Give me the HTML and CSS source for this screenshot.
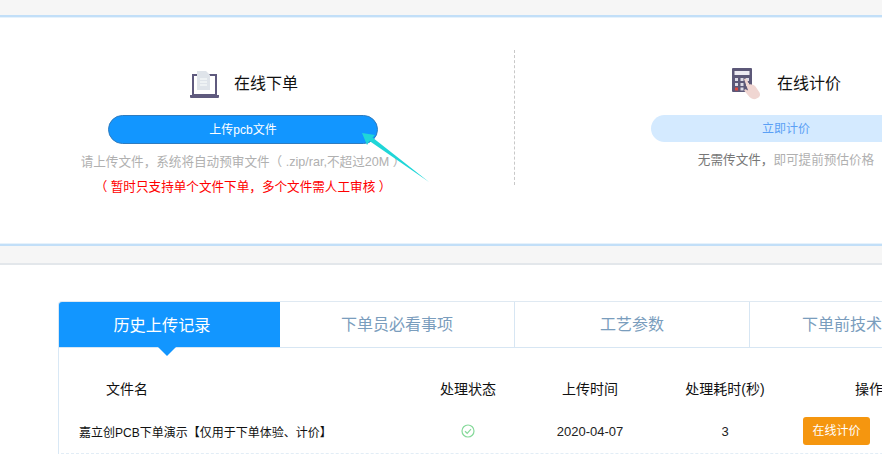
FILE: index.html
```html
<!DOCTYPE html>
<html lang="zh">
<head>
<meta charset="utf-8">
<title>在线下单</title>
<link rel="stylesheet" href="styles.css">
</head>
<body>
<div class="page">
  <div class="gray-bar top"></div>
  <section class="hero">
    <div class="col col-order">
      <div class="col-title">
        <svg class="icon" width="30" height="30" viewBox="0 0 30 30">
          <rect x="4" y="6" width="23" height="20" fill="#fff" stroke="#5f5a7e" stroke-width="2"/>
          <path d="M8 2h9l4 4v15H8z" fill="#dfe4ea"/>
          <path d="M11 10h7M11 13h7M11 16h7" stroke="#f4f6f8" stroke-width="1.400"/>
          <path d="M1 26h11l1 1h5l1-1h11v2a1 1 0 0 1-1 1H2a1 1 0 0 1-1-1z" fill="#5f5a7e"/>
        </svg>
        <span>在线下单</span>
      </div>
      <a class="btn-upload">上传pcb文件</a>
      <p class="hint">请上传文件<span class="punct">，</span>系统将自动预审文件（ .zip/rar,不超过20M ）</p>
      <p class="warn">（ 暂时只支持单个文件下单<span class="punct">，</span>多个文件需人工审核 ）</p>
    </div>
    <div class="col col-price">
      <div class="col-title">
        <svg class="icon" width="30" height="32" viewBox="0 0 30 32">
          <rect x="0" y="0" width="20" height="24" rx="1" fill="#5c5878"/>
          <rect x="2.500" y="3" width="15" height="4" fill="#eceaf2"/>
          <path d="M3 10h3v3H3zM8.500 10h3v3h-3zM14 10h3v3h-3zM3 15h3v3H3zM8.500 15h3v3h-3zM14 15h3v3h-3zM8.500 19.500h3v3h-3z" fill="#dcdbe6"/>
          <rect x="3" y="19.500" width="3" height="3" fill="#e0483f"/>
          <path d="M12 11c1-1 2.500-.5 3 .5l2 5c2-.5 5 .5 6.500 2l4 6c1 2 .5 4-1 5l-3 1.500c-2 .5-4.500-.5-6-2l-5-6c-.8-1 .5-2 1.600-1.500l2 1z" fill="#f0d6d2"/>
        </svg>
        <span>在线计价</span>
      </div>
      <a class="btn-price">立即计价</a>
      <p class="hint hint-price"><span class="hint-dark">无需传文件<span class="punct">，</span></span>即可提前预估价格</p>
    </div>
    <svg class="arrow" width="80" height="60" viewBox="0 0 80 60">
      <path d="M2 3 15 5 12.500 7.500 69 52 9.500 11 7 15z" fill="#1fd6d8"/>
    </svg>
  </section>
  <div class="gray-bar bottom"></div>
  <section class="records">
    <div class="panel">
      <div class="tabs">
        <div class="tab active">历史上传记录</div>
        <div class="tab">下单员必看事项</div>
        <div class="tab">工艺参数</div>
        <div class="tab tab-last">下单前技术</div>
      </div>
      <div class="row head">
        <div class="cell-name">文件名</div>
        <div class="cell">处理状态</div>
        <div class="cell">上传时间</div>
        <div class="cell">处理耗时(秒)</div>
        <div class="cell">操作</div>
      </div>
      <div class="row body">
        <div class="cell-file">嘉立创PCB下单演示【仅用于下单体验、计价】</div>
        <div class="cell">
          <svg class="check" width="14" height="14" viewBox="0 0 14 14">
            <circle cx="7" cy="7" r="6" fill="none" stroke="#86d99a" stroke-width="1.200"/>
            <path d="M4 7.200 6.200 9.300 10 5.200" fill="none" stroke="#86d99a" stroke-width="1.200"/>
          </svg>
        </div>
        <div class="cell">2020-04-07</div>
        <div class="cell">3</div>
        <div class="cell-op"><a class="btn-op">在线计价</a></div>
      </div>
    </div>
  </section>
</div>
</body>
</html>
```
FILE: styles.css
```css
* { box-sizing: border-box; }
html, body { margin: 0; height: 459px; overflow: hidden; background: #fff; }
body { font-family: "Liberation Sans", "Noto Sans CJK SC", sans-serif; color: #222; }
.page { width: 1100px; height: 459px; overflow: hidden; }
p { margin: 0; }
.gray-bar { background: #f6f6f6; }
.gray-bar.top { height: 15px; }
.gray-bar.bottom { height: 19px; border-bottom: 2px solid #e3e7eb; }
.hero {
  position: relative;
  display: flex;
  height: 231px;
  background: #fff;
  border-top: 2px solid #c2dff8;
  border-bottom: 2px solid #c2dff8;
  box-shadow: inset 0 1px 0 #e6f2fc, inset 0 -1px 0 #e6f2fc;
}
.col { display: flex; flex-direction: column; align-items: center; text-align: center; }
.col-order { width: 486px; padding-top: 51px; }
.col-price { width: 542px; margin-left: 29px; padding-top: 51px; position: relative; }
.col-price::before {
  content: "";
  position: absolute;
  left: -1px;
  top: 33px;
  height: 135px;
  border-left: 1px dashed #c8c8c8;
}
.col-title { display: flex; align-items: center; gap: 15px; height: 32px; margin-bottom: 15px; margin-left: 1px; font-size: 16px; line-height: 32px; color: #111; }
.icon { display: block; flex: none; }
.btn-upload {
  display: block;
  width: 270px;
  height: 29px;
  border: 1px solid #2f7cbf;
  border-radius: 15px;
  background: #1296ff;
  color: #fff;
  font-size: 12px;
  line-height: 28px;
}
.btn-price {
  display: block;
  width: 270px;
  height: 27px;
  border-radius: 14px;
  background: #d4eaff;
  color: #5aa0f5;
  font-size: 12px;
  line-height: 28px;
}
.hint { margin-top: 7px; font-size: 12.600px; line-height: 20px; color: #b0b0b0; white-space: nowrap; }
.hint-price { margin-top: 7px; }
.hint-dark { color: #777; }
.punct { font-family: "Noto Sans CJK TC", sans-serif; }
.warn { margin-top: 4px; font-size: 12.600px; line-height: 20px; color: #f00; white-space: nowrap; }
.arrow { position: absolute; left: 360px; top: 113px; }
.records { padding: 36px 0 0 58px; }
.panel { width: 1000px; border-left: 1px solid #d9e8f5; border-top: 1px solid #dfe9f2; border-top-left-radius: 4px; }
.tabs { display: flex; height: 46px; border-bottom: 1px solid #d7e6f3; }
.tab {
  position: relative;
  width: 235px;
  height: 45px;
  border-right: 1px solid #d7e6f3;
  font-size: 16px;
  line-height: 46px;
  text-align: center;
  color: #7a9dbd;
}
.tab.active { width: 221px; background: #1296ff; color: #fff; border-right: 0; padding-right: 15px; border-top-left-radius: 3px; font-size: 16.200px; }
.tab.active::after {
  content: "";
  position: absolute;
  left: 99px;
  top: 45px;
  border: 9px solid transparent;
  border-top-color: #1296ff;
  border-bottom: 0;
}
.tab-last { padding-left: 52px; text-align: left; }
.row { display: grid; grid-template-columns: 348px 122px 122px 148px 140px; align-items: center; }
.row.head { height: 62px; padding-top: 17px; font-size: 14px; color: #111; }
.row.body { height: 44px; font-size: 13px; border-bottom: 1px dashed #e2edf6; margin-left: 2px; grid-template-columns: 346px 122px 122px 148px 140px; }
.cell { text-align: center; white-space: nowrap; }
.cell-name { padding-left: 47px; }
.cell-file { padding-left: 18px; font-size: 12px; white-space: nowrap; color: #111; }
.cell-op { padding-left: 4px; margin-bottom: 2px; }
.check { display: block; margin: 0 auto 2px; }
.btn-op {
  display: block;
  width: 67px;
  height: 28px;
  border-radius: 3px;
  background: #f5960f;
  color: #fff;
  font-size: 12px;
  line-height: 28px;
  text-align: center;
}
```
